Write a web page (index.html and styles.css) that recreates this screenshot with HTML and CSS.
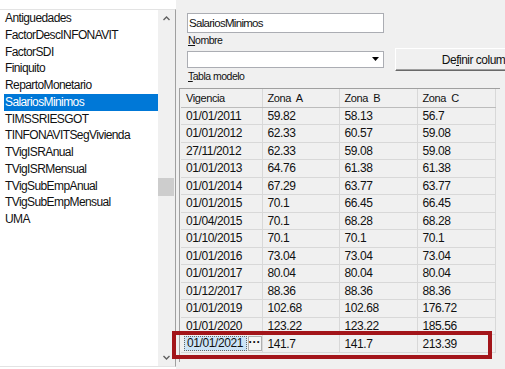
FILE: index.html
```html
<!DOCTYPE html>
<html lang="es">
<head>
    <meta charset="UTF-8">
    <meta name="viewport" content="width=device-width, initial-scale=1.0">
    <title>Tablas</title>
    <link rel="stylesheet" href="styles.css">
</head>
<body>
    <div class="window">
        <div class="list-pane">
            <ul class="list">
                <li>Antiguedades</li>
                <li>FactorDescINFONAVIT</li>
                <li>FactorSDI</li>
                <li>Finiquito</li>
                <li>RepartoMonetario</li>
                <li class="selected">SalariosMinimos</li>
                <li>TIMSSRIESGOT</li>
                <li>TINFONAVITSegVivienda</li>
                <li>TVigISRAnual</li>
                <li>TVigISRMensual</li>
                <li>TVigSubEmpAnual</li>
                <li>TVigSubEmpMensual</li>
                <li>UMA</li>
            </ul>
            <div class="vscroll">
                <div class="arrow">
                    <svg width="17" height="17" viewBox="0 0 17 17"><polyline points="5.5,10 8.5,7 11.5,10" fill="none" stroke="#606060" stroke-width="1.4"/></svg>
                </div>
                <div class="thumb"></div>
                <div class="spacer"></div>
                <div class="arrow">
                    <svg width="17" height="17" viewBox="0 0 17 17"><polyline points="5.5,7 8.5,10 11.5,7" fill="none" stroke="#606060" stroke-width="1.4"/></svg>
                </div>
            </div>
        </div>

        <div class="detail">
            <div class="form-row">
                <div class="fields">
                    <input class="text-field" type="text" value="SalariosMinimos">
                    <div class="field-label"><span class="u">N</span>ombre</div>
                    <div class="combo">
                        <span class="combo-value"></span>
                        <span class="combo-btn">
                            <svg width="8" height="5" viewBox="0 0 8 5"><polygon points="0,0 7,0 3.5,4" fill="#000"/></svg>
                        </span>
                    </div>
                    <div class="field-label"><span class="u">T</span>abla modelo</div>
                </div>
                <button class="define-btn">De<span class="u">f</span>inir columnas</button>
            </div>

            <div class="grid">
                <table>
                    <colgroup>
                        <col class="col-date">
                        <col class="col-a">
                        <col class="col-b">
                        <col class="col-c">
                    </colgroup>
                    <thead>
                        <tr><th>Vigencia</th><th>Zona&nbsp; A</th><th>Zona&nbsp; B</th><th>Zona&nbsp; C</th></tr>
                    </thead>
                    <tbody>
                        <tr><td>01/01/2011</td><td>59.82</td><td>58.13</td><td>56.7</td></tr>
                        <tr><td>01/01/2012</td><td>62.33</td><td>60.57</td><td>59.08</td></tr>
                        <tr><td>27/11/2012</td><td>62.33</td><td>59.08</td><td>59.08</td></tr>
                        <tr><td>01/01/2013</td><td>64.76</td><td>61.38</td><td>61.38</td></tr>
                        <tr><td>01/01/2014</td><td>67.29</td><td>63.77</td><td>63.77</td></tr>
                        <tr><td>01/01/2015</td><td>70.1</td><td>66.45</td><td>66.45</td></tr>
                        <tr><td>01/04/2015</td><td>70.1</td><td>68.28</td><td>68.28</td></tr>
                        <tr><td>01/10/2015</td><td>70.1</td><td>70.1</td><td>70.1</td></tr>
                        <tr><td>01/01/2016</td><td>73.04</td><td>73.04</td><td>73.04</td></tr>
                        <tr><td>01/01/2017</td><td>80.04</td><td>80.04</td><td>80.04</td></tr>
                        <tr><td>01/12/2017</td><td>88.36</td><td>88.36</td><td>88.36</td></tr>
                        <tr><td>01/01/2019</td><td>102.68</td><td>102.68</td><td>176.72</td></tr>
                        <tr><td>01/01/2020</td><td>123.22</td><td>123.22</td><td>185.56</td></tr>
                        <tr class="editing">
                            <td class="edit-cell"><div class="editor"><span class="edit-value">01/01/2021</span><span class="ellipsis">···</span></div></td>
                            <td>141.7</td><td>141.7</td><td>213.39</td>
                        </tr>
                    </tbody>
                </table>
            </div>
        </div>
    </div>

    <!-- marco rojo que resalta la fila nueva -->
    <div class="callout"></div>
</body>
</html>
```

FILE: styles.css
```css
* {
    box-sizing: border-box;
}

body {
    margin: 0;
    width: 505px;
    height: 369px;
    overflow: hidden;
    position: relative;
    background-color: #ffffff;
    font-family: "Liberation Sans", Arial, sans-serif;
    color: #111;
}

.window {
    display: flex;
    height: 100%;
}

.u {
    text-decoration: underline;
}

/* lista de tablas */
.list-pane {
    width: 176px;
    height: 358px;
    margin-top: 9px;
    display: flex;
    flex-shrink: 0;
    background-color: #ffffff;
    border-top: 1px solid #e3e3e3;
    border-right: 1px solid #a0a0a0;
    border-bottom: 1px solid #e3e3e3;
}

.list {
    list-style: none;
    margin: 0;
    padding: 0 0 0 4px;
    flex: 1;
    font-size: 12px;
    letter-spacing: -0.6px;
}

.list li {
    height: 16.75px;
    line-height: 16.75px;
    padding-left: 1px;
    white-space: nowrap;
}

.list li.selected {
    background-color: #0078d7;
    color: #ffffff;
}

.vscroll {
    width: 17px;
    display: flex;
    flex-direction: column;
    background-color: #f0f0f0;
}

.arrow {
    height: 17px;
}

.arrow svg {
    display: block;
}

.thumb {
    margin: 151px 1px 0 0;
    height: 18px;
    background-color: #cdcdcd;
}

.spacer {
    flex: 1;
}

/* panel de detalle */
.detail {
    flex: 1;
    min-width: 0;
    background-color: #f0f0f0;
    padding-top: 13px;
}

.form-row {
    display: flex;
}

.fields {
    margin-left: 11px;
    width: 197px;
    flex-shrink: 0;
}

.text-field {
    display: block;
    width: 197px;
    height: 20px;
    margin: 0;
    padding: 0 1px;
    border: 1px solid #abadb3;
    background-color: #ffffff;
    font-family: inherit;
    font-size: 11.5px;
    letter-spacing: -0.7px;
    color: #111;
}

.field-label {
    height: 14px;
    line-height: 14px;
    padding-left: 1px;
    font-size: 10.5px;
    letter-spacing: -0.5px;
}

.combo {
    display: flex;
    height: 17px;
    margin-top: 4px;
    margin-bottom: 1px;
    border: 1px solid #abadb3;
    background-color: #ffffff;
}

.combo-value {
    flex: 1;
}

.combo-btn {
    width: 15px;
    display: flex;
    align-items: center;
    justify-content: center;
}

.define-btn {
    width: 175px;
    height: 23px;
    margin: 35px 0 0 11px;
    padding: 0;
    flex-shrink: 0;
    background-color: #f0f0f0;
    border: 1px solid;
    border-color: #ffffff #696969 #696969 #ffffff;
    box-shadow: inset -1px -1px 0 #a0a0a0;
    font-family: inherit;
    font-size: 12px;
    letter-spacing: -0.5px;
    color: #111;
    text-align: center;
    white-space: nowrap;
}

/* rejilla de valores */
.grid {
    margin: 5px 5px 0 3px;
    height: 274px;
    border-left: 1px solid #a0a0a0;
    border-top: 1px solid #a0a0a0;
}

table {
    width: 314px;
    border-collapse: collapse;
    margin-left: 1px;
    table-layout: fixed;
    font-size: 12px;
    letter-spacing: -0.4px;
}

.col-date {
    width: 81px;
}

.col-a {
    width: 77px;
}

.col-b, .col-c {
    width: 78px;
}

th, td {
    padding: 0 0 0 5px;
    border: 1px solid #d8d8d8;
    text-align: left;
    font-weight: normal;
    white-space: nowrap;
    overflow: hidden;
}

th {
    height: 18px;
    font-size: 11px;
    border-top: none;
    border-bottom-color: #bcbcbc;
}

td {
    height: 17.5px;
}

th:first-child, td:first-child {
    border-left: none;
}

.edit-cell {
    padding: 1px 0 1px 3px;
}

.editor {
    display: flex;
    align-items: stretch;
    height: 15px;
}

.edit-value {
    flex: 1;
    padding-left: 2px;
    line-height: 13px;
    background-color: #cce4f7;
    border: 1px dotted #666;
}

.ellipsis {
    width: 14px;
    margin-left: 1px;
    line-height: 11px;
    text-align: center;
    font-weight: bold;
    letter-spacing: 0;
    background-color: #f5f5f5;
    border: 1px solid #b0b0b0;
}

.callout {
    position: absolute;
    left: 172px;
    top: 331px;
    width: 320px;
    height: 28px;
    border: 4px solid #a3151a;
}
```
